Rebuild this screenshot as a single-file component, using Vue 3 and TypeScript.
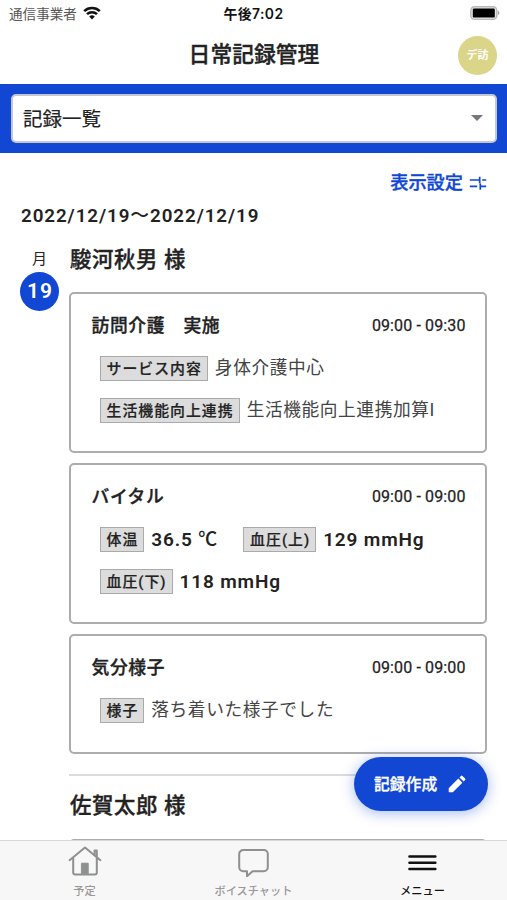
<script setup lang="ts">
interface Field {
  label: string
  value: string
  unit?: string
  bold?: boolean
}

interface RecordCard {
  title: string
  time: string
  rows: Field[][]
}

const records: RecordCard[] = [
  {
    title: '訪問介護　実施',
    time: '09:00 - 09:30',
    rows: [
      [{ label: 'サービス内容', value: '身体介護中心' }],
      [{ label: '生活機能向上連携', value: '生活機能向上連携加算I' }],
    ],
  },
  {
    title: 'バイタル',
    time: '09:00 - 09:00',
    rows: [
      [
        { label: '体温', value: '36.5 ', unit: '℃', bold: true },
        { label: '血圧(上)', value: '129 mmHg', bold: true },
      ],
      [{ label: '血圧(下)', value: '118 mmHg', bold: true }],
    ],
  },
  {
    title: '気分様子',
    time: '09:00 - 09:00',
    rows: [[{ label: '様子', value: '落ち着いた様子でした' }]],
  },
]
</script>

<template>
  <div class="screen">
    <div class="status">
      <div class="carrier">
        <span>通信事業者</span>
        <svg class="wifi" viewBox="0 0 18 14" width="18" height="14">
          <path d="M1.2 5.1a11.3 11.3 0 0 1 15.6 0" fill="none" stroke="#111" stroke-width="2.6" />
          <path d="M4 8.2a7.2 7.2 0 0 1 10 0" fill="none" stroke="#111" stroke-width="2.5" />
          <path d="M6.2 10.6a4 4 0 0 1 5.6 0L9 13.5z" fill="#111" />
        </svg>
      </div>
      <div class="clock">午後7:02</div>
      <div class="power">
        <svg viewBox="0 0 32 16" width="32" height="16">
          <rect x="2.8" y="1.8" width="26" height="12.6" rx="3.6" fill="#e6e6e6" stroke="#b9b9b9" stroke-width="1.4" />
          <rect x="4.8" y="3.6" width="22" height="9" rx="1.2" fill="#000" />
          <path d="M29.8 5.5c2.2.9 2.2 3.9 0 4.8z" fill="#a8a8a8" />
        </svg>
      </div>
    </div>

    <header class="header">
      <h1>日常記録管理</h1>
      <div class="avatar">デ訪</div>
    </header>

    <div class="picker">
      <div class="select">
        <span>記録一覧</span>
        <svg viewBox="0 0 12 6" width="12" height="6"><path d="M0 0h12L6 6z" fill="#777" /></svg>
      </div>
    </div>

    <main class="content">
      <div class="settings">
        <span>表示設定</span>
        <svg viewBox="0 0 18 16" width="18" height="16" fill="none" stroke="#1147d3" stroke-width="1.7">
          <path d="M.8 5h9.9M10.7 1.8v6.4M13.2 5h4M.8 11.4h7.4M11.3 8.4v6.4M11.3 11.4h5.9" />
        </svg>
      </div>
      <div class="range">2022/12/19<span class="tilde">～</span>2022/12/19</div>

      <div class="day">
        <div class="date">
          <span class="weekday">月</span>
          <span class="num">19</span>
        </div>
        <div class="list">
          <h2 class="person">駿河秋男 様</h2>
          <section v-for="(r, i) in records" :key="i" class="card">
            <div class="card-head">
              <h3>{{ r.title }}</h3>
              <time>{{ r.time }}</time>
            </div>
            <div v-for="(row, j) in r.rows" :key="j" class="row">
              <div v-for="f in row" :key="f.label" class="field">
                <span class="label">{{ f.label }}</span>
                <span class="value" :class="{ strong: f.bold }">{{ f.value }}<span v-if="f.unit" class="unit">{{ f.unit }}</span></span>
              </div>
            </div>
          </section>
          <hr class="divider" />
          <h2 class="person">佐賀太郎 様</h2>
          <section class="card"></section>
        </div>
      </div>
    </main>

    <button class="fab">
      <span>記録作成</span>
      <svg viewBox="0 0 18 18" width="18" height="18" fill="#fff">
        <path d="M.7 13.2 10.3 3.6l4.1 4.1L4.8 17.3H1.6a.9.9 0 0 1-.9-.9zM11.5 2.4l1.5-1.5a1 1 0 0 1 1.4 0l2.7 2.7a1 1 0 0 1 0 1.4l-1.5 1.5z" />
      </svg>
    </button>

    <nav class="tabs">
      <div class="tab">
        <svg viewBox="0 0 34 32" width="34" height="32" fill="none" stroke="#8e9090" stroke-width="2" stroke-linejoin="round" stroke-linecap="round">
          <path d="M1.6 15.2 17 2.6l15.4 12.6" />
          <path d="M5.2 13v14.4c0 1.2.8 2 2 2h19.6c1.2 0 2-.8 2-2V13" />
          <path d="M26.6 9.8V5.4h2.2V12" />
          <path d="M13.8 18.2h6.4v10.6h-6.4z" fill="#8e9090" stroke-width="1" />
        </svg>
        <span>予定</span>
      </div>
      <div class="tab">
        <svg viewBox="0 0 34 32" width="34" height="32" fill="none" stroke="#8e9090" stroke-width="2" stroke-linejoin="round">
          <path d="M6.2 5h20.6a4 4 0 0 1 4 4v13.2a4 4 0 0 1-4 4H15.6l-5.6 5v-5H6.2a4 4 0 0 1-4-4V9a4 4 0 0 1 4-4z" />
        </svg>
        <span>ボイスチャット</span>
      </div>
      <div class="tab active">
        <svg viewBox="0 0 34 32" width="34" height="32" fill="none" stroke="#111" stroke-width="2.4" stroke-linecap="round">
          <path d="M3.4 11.5h26M3.4 17.8h26M3.4 24h26" />
        </svg>
        <span>メニュー</span>
      </div>
    </nav>
  </div>
</template>

<style>
body {
  margin: 0;
  background: #fff;
}
</style>

<style scoped>
.screen {
  position: relative;
  width: 507px;
  height: 900px;
  overflow: hidden;
  display: flex;
  flex-direction: column;
  background: #fff;
  color: #222;
  font-family: Roboto, 'Noto Sans CJK JP', sans-serif;
}
.screen * {
  box-sizing: border-box;
}
h1,
h2,
h3 {
  margin: 0;
  font-weight: 500;
  -webkit-text-stroke: 0.35px currentColor;
}
svg {
  display: block;
  flex: none;
}
.status {
  height: 28px;
  flex: none;
  display: grid;
  grid-template-columns: 1fr auto 1fr;
  padding: 0 7px 0 9px;
  line-height: 28px;
  font-size: 13.6px;
}
.carrier {
  display: flex;
  align-items: center;
  gap: 6px;
  color: #555;
}
.wifi {
  margin-bottom: 2px;
}
.clock {
  font-family: Inter, 'Noto Sans CJK JP', sans-serif;
  font-weight: 600;
  font-size: 13.9px;
  letter-spacing: 0.4px;
  margin-right: 2px;
  color: #111;
}
.power {
  display: flex;
  justify-content: flex-end;
  align-items: center;
  padding-bottom: 2px;
}
.header {
  height: 56px;
  flex: none;
  display: grid;
  grid-template-columns: 1fr auto 1fr;
  align-items: center;
  padding: 0 10px 0 11px;
}
h1 {
  grid-column: 2;
  font-size: 21.8px;
  line-height: 30px;
  padding-bottom: 2px;
}
.avatar {
  justify-self: end;
  width: 39px;
  height: 39px;
  margin-bottom: 2px;
  border-radius: 50%;
  background: #dad588;
  color: #fff;
  font-size: 11px;
  font-weight: 700;
  line-height: 40px;
  text-align: center;
}
.picker {
  height: 69px;
  flex: none;
  padding: 10px 10px 9px 11px;
  background: #1147d3;
}
.select {
  height: 49px;
  display: flex;
  align-items: center;
  justify-content: space-between;
  padding: 0 12px 2px 10px;
  border: 2px solid #c3c7d2;
  border-radius: 5px;
  background: #fff;
  font-size: 19.5px;
  -webkit-text-stroke: 0.2px currentColor;
}
.content {
  flex: 1;
  min-height: 0;
  overflow: hidden;
  padding: 0 20px;
}
.settings {
  display: flex;
  align-items: center;
  justify-content: flex-end;
  gap: 6px;
  margin-top: 15px;
  height: 26px;
  color: #1147d3;
  font-size: 18.2px;
  font-weight: 500;
  -webkit-text-stroke: 0.35px currentColor;
}
.settings svg {
  margin-top: 3px;
}
.range {
  margin: 11px 0 0 1px;
  height: 22px;
  line-height: 22px;
  font-size: 18.8px;
  font-weight: 600;
  letter-spacing: 0.92px;
}
.tilde {
  font-weight: 500;
}
.day {
  display: flex;
  margin-top: 17px;
}
.date {
  width: 49px;
  flex: none;
  display: flex;
  flex-direction: column;
}
.weekday {
  width: 39px;
  margin-top: 4px;
  height: 22px;
  line-height: 22px;
  text-align: center;
  font-size: 15px;
}
.num {
  width: 39px;
  height: 39px;
  margin-top: 2px;
  border-radius: 50%;
  background: #1147d3;
  color: #fff;
  font-size: 21px;
  font-weight: 600;
  letter-spacing: 1px;
  line-height: 38px;
  padding-left: 1px;
  text-align: center;
}
.list {
  flex: 1;
  min-width: 0;
}
.person {
  height: 30px;
  margin: 1px 0 17px 1px;
  line-height: 30px;
  font-size: 21.4px;
  letter-spacing: 0.6px;
}
.divider + .person {
  margin-bottom: 18px;
}
.card {
  min-height: 119px;
  margin-bottom: 10px;
  padding: 22px 19.5px 28.5px 20.5px;
  border: 2px solid #acacac;
  border-radius: 5px;
}
.card-head {
  display: flex;
  align-items: center;
  justify-content: space-between;
  height: 20px;
  margin-bottom: 20px;
}
h3 {
  font-size: 17.8px;
  line-height: 20px;
  letter-spacing: 0.6px;
}
time {
  font-size: 16px;
  line-height: 20px;
  letter-spacing: 0.12px;
  -webkit-text-stroke: 0.25px currentColor;
}
.row {
  display: flex;
  gap: 25px;
  height: 25px;
  margin-left: 8px;
}
.row + .row {
  margin-top: 16.5px;
}
.field {
  display: flex;
  align-items: center;
  gap: 7px;
}
.label {
  height: 25px;
  padding: 0 5px 0 6px;
  border: 1px solid #aaa;
  background: #dcdcdc;
  font-size: 14.9px;
  font-weight: 500;
  letter-spacing: 1px;
  line-height: 24px;
  white-space: nowrap;
  -webkit-text-stroke: 0.2px currentColor;
}
.value {
  font-size: 17.7px;
  line-height: 25px;
  letter-spacing: 0.6px;
  color: #444;
  white-space: nowrap;
}
.value.strong {
  font-weight: 600;
  font-size: 19px;
  letter-spacing: 0.85px;
  color: #222;
}
.unit {
  font-weight: 500;
}
.divider {
  height: 2px;
  margin: 20px 0 15px;
  border: 0;
  background: #dcdcdc;
}
.fab {
  position: absolute;
  left: 354px;
  top: 757px;
  width: 134px;
  height: 54px;
  display: flex;
  align-items: center;
  gap: 11px;
  padding: 0 0 2px 20px;
  border: 0;
  border-radius: 27px;
  background: #1147d3;
  box-shadow: 0 2px 14px rgba(17, 71, 211, 0.38);
  color: #fff;
  font-family: inherit;
  font-size: 15.8px;
  font-weight: 500;
  -webkit-text-stroke: 0.3px currentColor;
}
.fab svg {
  margin-top: 2px;
}
.tabs {
  height: 60px;
  flex: none;
  display: grid;
  grid-template-columns: repeat(3, 1fr);
  border-top: 1px solid #d8d8d8;
  background: #f7f7f7;
}
.tab {
  display: flex;
  flex-direction: column;
  align-items: center;
  padding-top: 4px;
  color: #999;
  font-size: 11.2px;
  font-weight: 500;
  line-height: 16px;
}
.tab span {
  margin-top: 7px;
}
.tab.active {
  color: #111;
}
</style>
